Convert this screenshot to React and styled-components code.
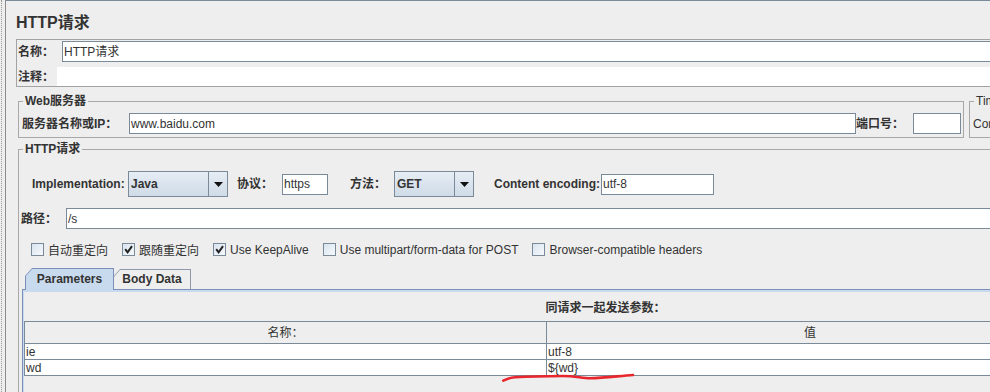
import React from 'react';
import styled, { createGlobalStyle } from 'styled-components';

const Global = createGlobalStyle`
  html, body { margin: 0; padding: 0; background: #eeeeee; overflow: hidden; }
  body {
    font-family: "Liberation Sans", "Noto Sans CJK SC", sans-serif;
    font-size: 12px;
    color: #333333;
  }
  * { box-sizing: border-box; }
`;

const Frame = styled.div`
  position: relative;
  width: 990px;
  height: 392px;
  overflow: hidden;
  display: flex;
  background: #eeeeee;
`;

const Rail = styled.div`
  flex: none;
  width: 5px;
  margin-left: 1px;
  border-left: 1px dotted #9a9a9a;
  border-right: 1px solid #8c8c8c;
`;

const Main = styled.div`
  flex: none;
  width: 1200px;
  border-top: 1px solid #7a8a99;
  padding-left: 10px;
  display: flex;
  flex-direction: column;
`;

const Title = styled.div`
  padding-top: 12px;
  height: 32px;
  line-height: 20px;
  font-size: 16px;
  font-weight: bold;
  color: #333;
  margin-bottom: 6px;
`;

const NamePanel = styled.div`
  border: 1px solid #a3a3a3;
  padding-top: 1px;
  display: flex;
  flex-direction: column;
`;

const Row = styled.div`
  display: flex;
  align-items: center;
  height: ${p => p.$h || 21}px;
  margin-top: ${p => p.$mt || 0}px;
  padding-left: ${p => p.$pl || 0}px;
  padding-right: ${p => p.$pr || 0}px;
  gap: ${p => p.$gap || 0}px;
`;

const Label = styled.span`
  flex: none;
  width: ${p => (p.$w ? `${p.$w}px` : 'auto')};
  margin-left: ${p => p.$ml || 0}px;
  padding-left: ${p => p.$pl || 0}px;
  font-weight: ${p => (p.$plain ? 'normal' : 'bold')};
  white-space: nowrap;
  line-height: 14px;
  color: #333;
`;

const Field = styled.div`
  flex: ${p => (p.$w ? 'none' : '1')};
  width: ${p => (p.$w ? `${p.$w}px` : 'auto')};
  height: ${p => p.$h || 21}px;
  border: 1px solid #7a8a99;
  background: #ffffff;
  padding-left: 1px;
  display: flex;
  align-items: center;
  white-space: nowrap;
  overflow: hidden;
  line-height: 14px;
  color: #333;
`;

const CommentArea = styled.div`
  flex: 1;
  align-self: stretch;
  background: #ffffff;
`;

const Groups = styled.div`
  display: flex;
  gap: 5px;
  margin-top: ${p => p.$mt || 0}px;
  margin-left: 2px;
`;

const Fieldset = styled.div`
  position: relative;
  flex: none;
  display: flex;
  flex-direction: column;
  width: ${p => (p.$w ? `${p.$w}px` : 'auto')};
  height: ${p => (p.$h ? `${p.$h}px` : 'auto')};
  margin-top: ${p => p.$mt || 0}px;
  margin-left: ${p => p.$ml || 0}px;
  border: 1px solid #a8a8a8;
  padding: ${p => p.$pad || '0'};
`;

const Legend = styled.span`
  position: absolute;
  top: -8px;
  left: 4px;
  padding: 0 2px;
  background: #eeeeee;
  line-height: 14px;
  font-weight: ${p => (p.$plain ? 'normal' : 'bold')};
  color: #333;
  white-space: nowrap;
`;

const Combo = styled.div`
  flex: none;
  display: flex;
  width: ${p => p.$w}px;
  height: 26px;
  border: 1px solid #7a8a99;
  background: linear-gradient(#e6edf4, #cfdbe7);
`;

const ComboText = styled.span`
  flex: 1;
  display: flex;
  align-items: center;
  padding-left: 2px;
  font-weight: bold;
  color: #333;
`;

const ComboArrow = styled.span`
  flex: none;
  width: 19px;
  border-left: 1px solid #7a8a99;
  display: flex;
  align-items: center;
  justify-content: center;
`;

const CheckItem = styled.span`
  display: flex;
  align-items: center;
  gap: 4px;
  white-space: nowrap;
`;

const Box = styled.span`
  flex: none;
  width: 13px;
  height: 13px;
  border: 1px solid #7a8a99;
  background: linear-gradient(135deg, #d9e4ef, #f6f9fc);
  display: flex;
  align-items: center;
  justify-content: center;
`;

const TabStrip = styled.div`
  position: relative;
  z-index: 2;
  display: flex;
  align-items: flex-end;
  height: 21px;
  margin-top: 12px;
  padding-left: 6px;
`;

const Tab = styled.div`
  position: relative;
  flex: none;
  width: ${p => p.$w}px;
  height: ${p => (p.$active ? 22 : 20)}px;
  margin-bottom: ${p => (p.$active ? -1 : 0)}px;
  margin-left: ${p => p.$ml || 0}px;
  z-index: ${p => (p.$active ? 2 : 1)};
  background: ${p => (p.$active ? '#7b8fb9' : '#8e9aaa')};
  clip-path: polygon(0 8px, 7px 0, 100% 0, 100% 100%, 0 100%);
  padding: 1px 1px 0 1px;
`;

const TabFace = styled.div`
  height: 100%;
  background: ${p => (p.$active ? '#c8daee' : '#eeeeee')};
  clip-path: polygon(0 7px, 6px 0, 100% 0, 100% 100%, 0 100%);
  display: flex;
  align-items: center;
  justify-content: center;
  padding-bottom: 2px;
  font-weight: bold;
  line-height: 14px;
  color: #333;
`;

const TabPanel = styled.div`
  width: 1165px;
  height: 200px;
  flex: none;
  margin-left: 3px;
  border-top: 1px solid #7b8fb9;
  border-left: 1px solid #7b8fb9;
  box-shadow: inset 1px 2px 0 #c8daee;
  padding: 11px 0 0 1px;
`;

const PanelTitle = styled.div`
  text-align: center;
  font-weight: bold;
  line-height: 14px;
  height: 14px;
  color: #333;
`;

const Table = styled.div`
  width: 1049px;
  margin-top: 6px;
  border-left: 1px solid #7a8a99;
`;

const TRow = styled.div`
  display: grid;
  grid-template-columns: 522px 1fr;
  height: ${p => (p.$head ? 23 : 16)}px;
  border-top: ${p => (p.$head ? '1px solid #7a8a99' : '0')};
  border-bottom: 1px solid #7a8a99;
  background: ${p => (p.$head ? '#eeeeee' : '#ffffff')};
`;

const Cell = styled.div`
  display: flex;
  align-items: center;
  justify-content: ${p => (p.$head ? 'center' : 'flex-start')};
  padding-left: ${p => (p.$head ? 0 : 1)}px;
  border-right: ${p => (p.$first ? '1px solid #7a8a99' : '0')};
  line-height: 14px;
  color: #333;
  white-space: nowrap;
`;

const Scribble = styled.svg`
  position: absolute;
  left: 500px;
  top: 370px;
  width: 140px;
  height: 14px;
  pointer-events: none;
`;

const Arrow = () => (
  <svg width="9" height="5" viewBox="0 0 9 5">
    <path d="M0 0 H9 L4.5 5 Z" fill="#111" />
  </svg>
);

const Check = () => (
  <svg width="11" height="11" viewBox="0 0 11 11">
    <path d="M2.2 5.2 L4.6 8.4 L9 2.2" fill="none" stroke="#222" strokeWidth="2" strokeLinejoin="miter" />
  </svg>
);

const CheckBox = ({ checked, label }) => (
  <CheckItem>
    <Box>{checked && <Check />}</Box>
    <span>{label}</span>
  </CheckItem>
);

const params = [
  { name: 'ie', value: 'utf-8' },
  { name: 'wd', value: '${wd}' },
];

export default function App() {
  return (
    <>
      <Global />
      <Frame>
        <Rail />
        <Main>
          <Title>HTTP请求</Title>
          <NamePanel>
            <Row>
              <Label $w={45} $pl={1}>名称：</Label>
              <Field>HTTP请求</Field>
            </Row>
            <Row $mt={5} $h={19}>
              <Label $w={40} $pl={1}>注释：</Label>
              <CommentArea />
            </Row>
          </NamePanel>

          <Groups $mt={14}>
            <Fieldset $w={946} $pad="11px 2px 3px 3px">
              <Legend>Web服务器</Legend>
              <Row>
                <Label $w={107}>服务器名称或IP：</Label>
                <Field>www.baidu.com</Field>
                <Label $w={57}>端口号：</Label>
                <Field $w={48} />
              </Row>
            </Fieldset>
            <Fieldset $w={300} $pad="11px 2px 3px 3px">
              <Legend $plain>Timeouts (milliseconds)</Legend>
              <Row>
                <Label $plain>Connect:</Label>
              </Row>
            </Fieldset>
          </Groups>

          <Fieldset $mt={11} $ml={2} $h={300} $pad="21px 0 0 0">
            <Legend>HTTP请求</Legend>
            <Row $h={26} $pl={13}>
              <Label $w={96}>Implementation:</Label>
              <Combo $w={100}>
                <ComboText>Java</ComboText>
                <ComboArrow><Arrow /></ComboArrow>
              </Combo>
              <Label $w={45} $ml={9}>协议：</Label>
              <Field $w={46}>https</Field>
              <Label $w={44} $ml={22}>方法：</Label>
              <Combo $w={80}>
                <ComboText>GET</ComboText>
                <ComboArrow><Arrow /></ComboArrow>
              </Combo>
              <Label $w={107} $ml={20}>Content encoding:</Label>
              <Field $w={113}>utf-8</Field>
            </Row>
            <Row $mt={11} $pl={2}>
              <Label $w={45}>路径：</Label>
              <Field>/s</Field>
            </Row>
            <Row $mt={14} $h={13} $pl={12} $gap={14}>
              <CheckBox label="自动重定向" />
              <CheckBox checked label="跟随重定向" />
              <CheckBox checked label="Use KeepAlive" />
              <CheckBox label="Use multipart/form-data for POST" />
              <CheckBox label="Browser-compatible headers" />
            </Row>
            <TabStrip>
              <Tab $w={89} $active>
                <TabFace $active>Parameters</TabFace>
              </Tab>
              <Tab $w={78} $ml={-1}>
                <TabFace>Body Data</TabFace>
              </Tab>
            </TabStrip>
            <TabPanel>
              <PanelTitle>同请求一起发送参数：</PanelTitle>
              <Table>
                <TRow $head>
                  <Cell $head $first>名称：</Cell>
                  <Cell $head>值</Cell>
                </TRow>
                {params.map(p => (
                  <TRow key={p.name}>
                    <Cell $first>{p.name}</Cell>
                    <Cell>{p.value}</Cell>
                  </TRow>
                ))}
              </Table>
            </TabPanel>
          </Fieldset>
        </Main>
        <Scribble viewBox="0 0 140 14">
          <path
            d="M3.3 10.7 C7 8.8, 10 7.6, 15 7.3 C30 6.6, 48 6.2, 63 6 C75 6, 82 8.3, 90 8.3 C105 8, 120 5.8, 133 5"
            fill="none"
            stroke="#e8262b"
            strokeWidth="2.6"
            strokeLinecap="round"
          />
        </Scribble>
      </Frame>
    </>
  );
}
